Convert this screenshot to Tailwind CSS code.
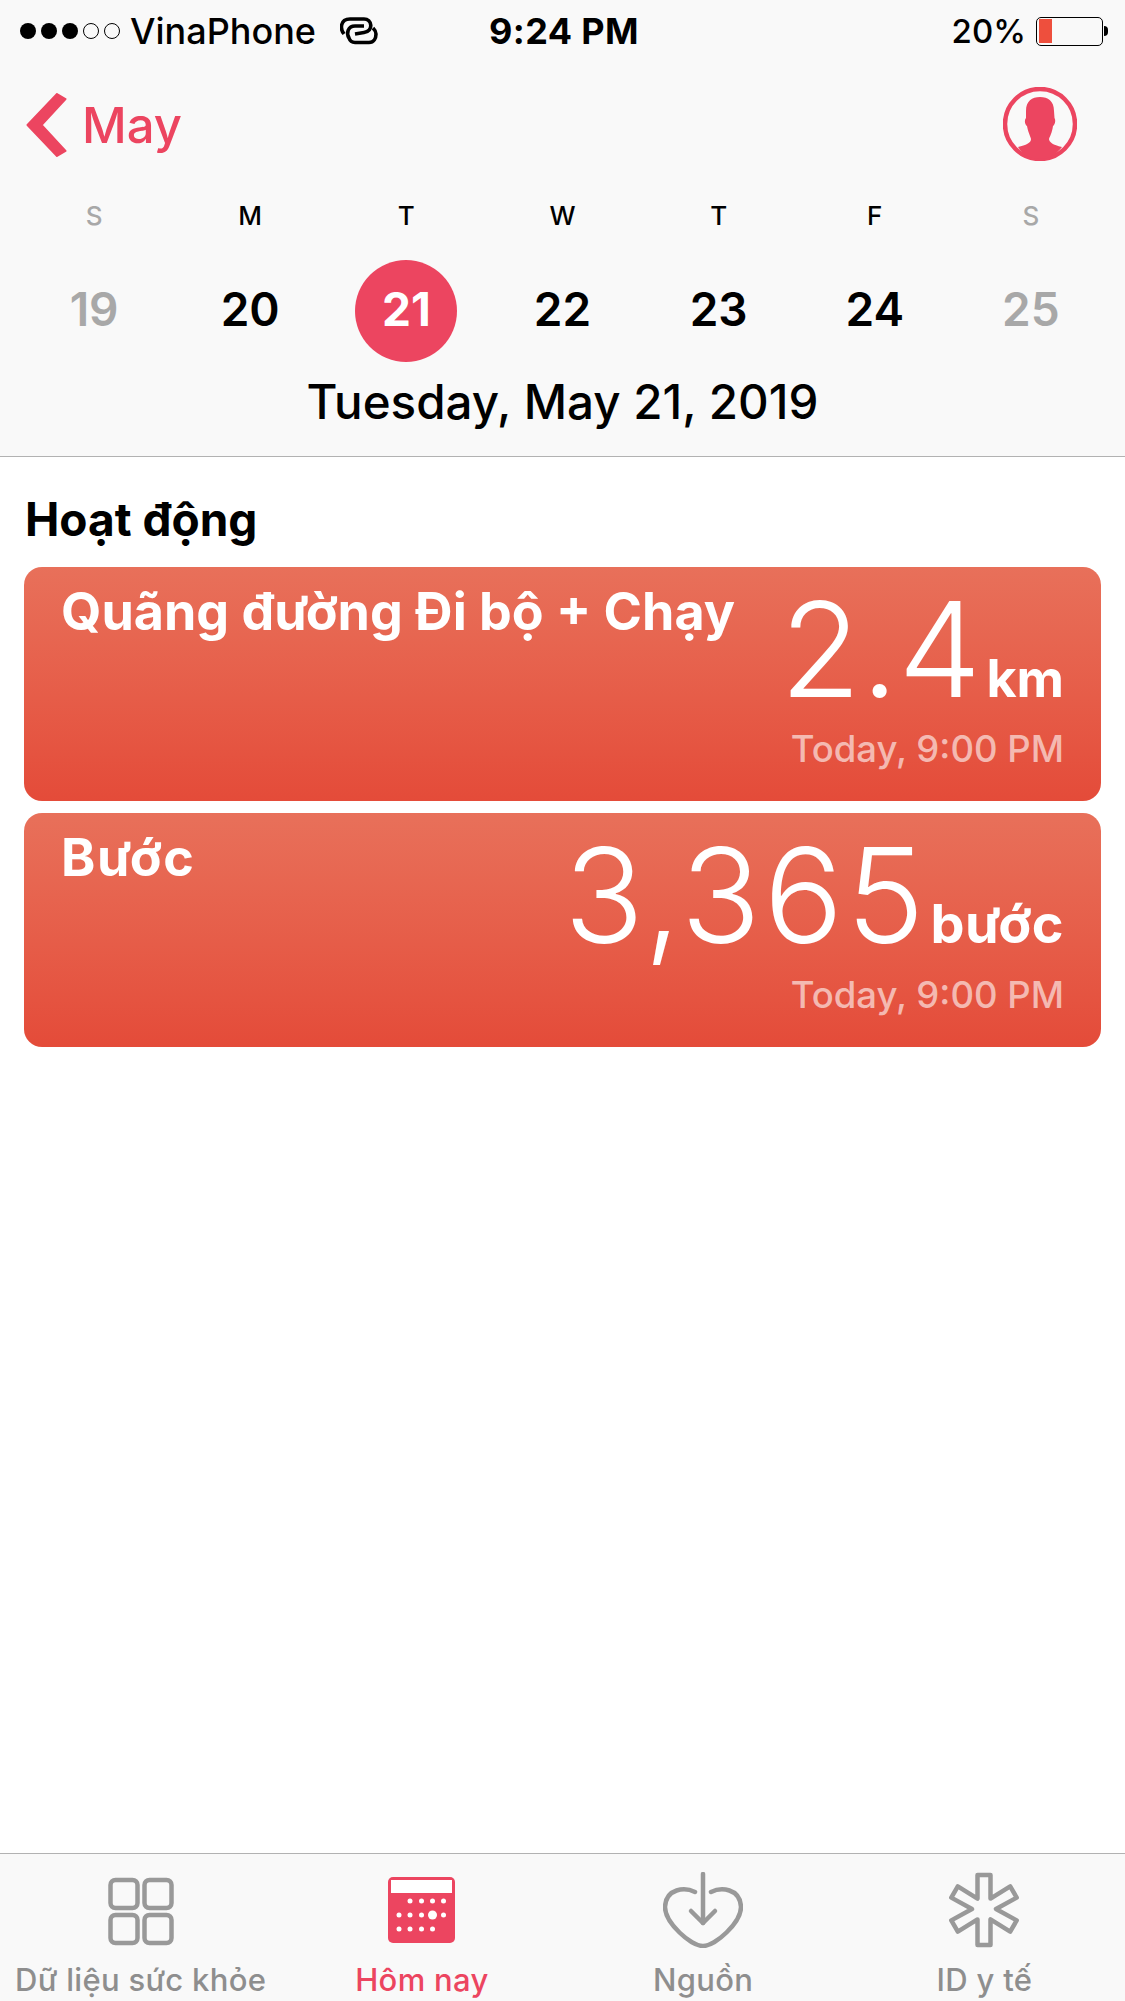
<!DOCTYPE html>
<html lang="vi">
<head>
<meta charset="utf-8">
<script src="https://cdn.jsdelivr.net/npm/@tailwindcss/browser@4"></script>
</head>
<body class="bg-white font-['Inter','Noto_Sans',sans-serif] text-black">
<div class="w-[1125px] h-[2001px] flex flex-col overflow-hidden">
  <header class="h-[457px] shrink-0 bg-[#f9f9f9] border-b-[1.5px] border-[#b2b2b2]">
    <div class="h-[64px] pt-[11px] pl-[20px] pr-[17px] grid grid-cols-[1fr_auto_1fr] items-start text-[36px] leading-[40px]">
      <div class="flex items-center">
        <div class="flex gap-[5px] items-center">
          <span class="w-[16px] h-[16px] rounded-full bg-black"></span>
          <span class="w-[16px] h-[16px] rounded-full bg-black"></span>
          <span class="w-[16px] h-[16px] rounded-full bg-black"></span>
          <span class="w-[16px] h-[16px] rounded-full border border-black"></span>
          <span class="w-[16px] h-[16px] rounded-full border border-black"></span>
        </div>
        <span class="ml-[10px] font-medium">VinaPhone</span>
        <svg class="ml-[24px]" width="38" height="28" viewBox="0 0 38 28" fill="none" stroke="#000" stroke-width="3.6" stroke-linecap="butt"><path d="M4 17 C0 12 0 2 10 2 L24 2 C32 2 34 14 24 15.500 L15 17"/><path d="M24 9 L15 9 C8 9 6 16 9 21 C10 24 12 25.500 15 25.500 L29 25.500 C34 25.500 36 21 36 17 C36 15 35 13 33 11"/></svg>
      </div>
      <div class="font-bold tracking-[0.4px]">9:24 PM</div>
      <div class="flex items-center justify-end">
        <span class="font-medium text-[33px]">20%</span>
        <div class="ml-[10px] w-[67px] h-[29px] rounded-[5px] border-[1.5px] border-black p-[1.5px] flex">
          <div class="w-[13px] bg-[#ee4f3d]"></div>
        </div>
        <div class="ml-[1px] w-[4px] h-[10px] bg-black rounded-r-full"></div>
      </div>
    </div>
    <div class="h-[124px] pl-[26px] pr-[48px] flex items-center justify-between">
      <div class="flex items-center text-[#ec4560]">
        <svg class="mb-[2px]" width="41" height="64" viewBox="0 0 41 64" fill="#ec4560" stroke="#ec4560" stroke-width="2" stroke-linejoin="round"><path d="M31 1 L39.500 6 L15.500 32 L39.500 58 L31 63 L1.500 32 Z"/></svg>
        <span class="ml-[15px] text-[49px] leading-[60px] font-medium">May</span>
      </div>
      <svg class="mb-[4px]" width="74" height="74" viewBox="0 0 74 74"><circle cx="37" cy="37" r="35" fill="#f9f9f9" stroke="#ec4560" stroke-width="4.5"/><path d="M37 10 C45 10 51 14 51 24 L51.500 31 C53 33 52 38 50 39 C49 46 47 49 46 52 C46 55 50 58 59 60 C53 68 45 72 37 72 C28 72 20 68 15 60 C23 58 28 56 28 52 C27 48 25 45 24 39 C22 38 21 33 23 31 L23 24 C23 14 29 10 37 10 Z" fill="#ec4560"/></svg>
    </div>
    <div class="grid grid-cols-7 mt-[12px] px-[16px] text-center text-[26px] leading-[32px] font-medium">
      <div class="text-[#a8a8a8]">S</div><div>M</div><div>T</div><div>W</div><div>T</div><div>F</div><div class="text-[#a8a8a8]">S</div>
    </div>
    <div class="grid grid-cols-7 px-[16px] mt-[28px] text-center text-[46px] font-semibold h-[102px] items-center">
      <div class="pb-[4px] text-[#a8a8a8]">19</div><div class="pb-[4px]">20</div>
      <div class="flex justify-center"><div class="w-[102px] h-[102px] pb-[4px] rounded-full bg-[#ec4560] text-white font-bold flex items-center justify-center">21</div></div>
      <div class="pb-[4px]">22</div><div class="pb-[4px]">23</div><div class="pb-[4px]">24</div><div class="pb-[4px] text-[#a8a8a8]">25</div>
    </div>
    <div class="mt-[12px] text-center text-[47.500px] leading-[56px] font-medium">Tuesday, May 21, 2019</div>
  </header>

  <main class="flex-1 bg-white px-[24px]">
    <h2 class="pl-[1px] pt-[37px] text-[46px] leading-[50px] font-bold">Hoạt động</h2>
    <section class="mt-[23px] h-[234px] rounded-[18px] bg-gradient-to-b from-[#e8705a] to-[#e44b39] pl-[37px] pr-[37px] pt-[17px] flex justify-between text-white">
      <div class="text-[52px] leading-[56px] font-bold">Quãng đường Đi bộ + Chạy</div>
      <div class="flex flex-col items-end">
        <div class="flex items-baseline h-[130px]"><span class="text-[132px] leading-[130px] font-light">2.4</span><span class="ml-[5px] text-[52px] leading-[50px] font-bold">km</span></div>
        <div class="mt-[15px] text-[36.500px] leading-[40px] font-medium text-white/60">Today, 9:00 PM</div>
      </div>
    </section>
    <section class="mt-[12px] h-[234px] rounded-[18px] bg-gradient-to-b from-[#e8705a] to-[#e44b39] pl-[37px] pr-[37px] pt-[17px] flex justify-between text-white">
      <div class="text-[52px] leading-[56px] font-bold tracking-[1.5px]">Bước</div>
      <div class="flex flex-col items-end">
        <div class="flex items-baseline h-[130px]"><span class="text-[132px] leading-[130px] font-light tracking-[3px]">3,365</span><span class="ml-[3px] text-[54px] leading-[50px] font-bold tracking-[0.5px]">bước</span></div>
        <div class="mt-[15px] text-[36.500px] leading-[40px] font-medium text-white/60">Today, 9:00 PM</div>
      </div>
    </section>
  </main>

  <nav class="h-[148px] shrink-0 bg-[#f9f9f9] border-t-[1.5px] border-[#b2b2b2] grid grid-cols-4 text-[31px] leading-[36px] font-medium tracking-[0.3px] text-[#8e8e8e] text-center">
    <div class="flex flex-col items-center">
      <svg class="mt-[20px]" width="66" height="74" viewBox="0 0 66 74" fill="none" stroke="#999" stroke-width="4.5"><rect x="2.500" y="6" width="27" height="28" rx="5"/><rect x="36.500" y="6" width="27" height="28" rx="5"/><rect x="2.500" y="41" width="27" height="28" rx="5"/><rect x="36.500" y="41" width="27" height="28" rx="5"/></svg>
      <span class="mt-[14px]">Dữ liệu sức khỏe</span>
    </div>
    <div class="flex flex-col items-center text-[#ec4560]">
      <svg class="mt-[20px]" width="67" height="74" viewBox="0 0 67 74"><rect y="3" width="67" height="66" rx="5" fill="#ec4560"/><rect x="3" y="6" width="61" height="13" fill="#fff"/><g fill="#fff"><circle cx="22" cy="27" r="2.500"/><circle cx="33.500" cy="27" r="2.500"/><circle cx="44.500" cy="27" r="2.500"/><circle cx="55.500" cy="27" r="2.500"/><circle cx="11" cy="41" r="2.500"/><circle cx="22" cy="41" r="2.500"/><circle cx="33.500" cy="41" r="2.500"/><circle cx="44.500" cy="41" r="4.500"/><circle cx="55.500" cy="41" r="2.500"/><circle cx="11" cy="55" r="2.500"/><circle cx="22" cy="55" r="2.500"/><circle cx="33.500" cy="55" r="2.500"/><circle cx="44.500" cy="55" r="2.500"/></g></svg>
      <span class="mt-[14px]">Hôm nay</span>
    </div>
    <div class="flex flex-col items-center">
      <svg class="mt-[18px]" width="80" height="76" viewBox="0 0 80 76" fill="none" stroke="#999" stroke-width="4.5" stroke-linecap="round" stroke-linejoin="round"><path d="M32 20 C22 15 3 16 2 35 C2 51 28 74 40 74 C52 74 78 51 78 35 C77 16 58 15 48 20"/><path d="M40 2 L40 51"/><path d="M28 39 L40 51 L52 39"/></svg>
      <span class="mt-[14px]">Nguồn</span>
    </div>
    <div class="flex flex-col items-center">
      <svg class="mt-[18px]" width="72" height="76" viewBox="0 0 72 76" fill="none" stroke="#999" stroke-width="4.5" stroke-linejoin="round"><path d="M29.500 3 L42.500 3 L42.500 26.600 L62.200 14.400 L68.700 25.600 L48 37 L68.700 48.400 L62.200 59.600 L42.500 47.400 L42.500 73 L29.500 73 L29.500 47.400 L9.800 59.600 L3.300 48.400 L24 37 L3.300 25.600 L9.800 14.400 L29.500 26.600 Z"/></svg>
      <span class="mt-[14px]">ID y tế</span>
    </div>
  </nav>
</div>
</body>
</html>
